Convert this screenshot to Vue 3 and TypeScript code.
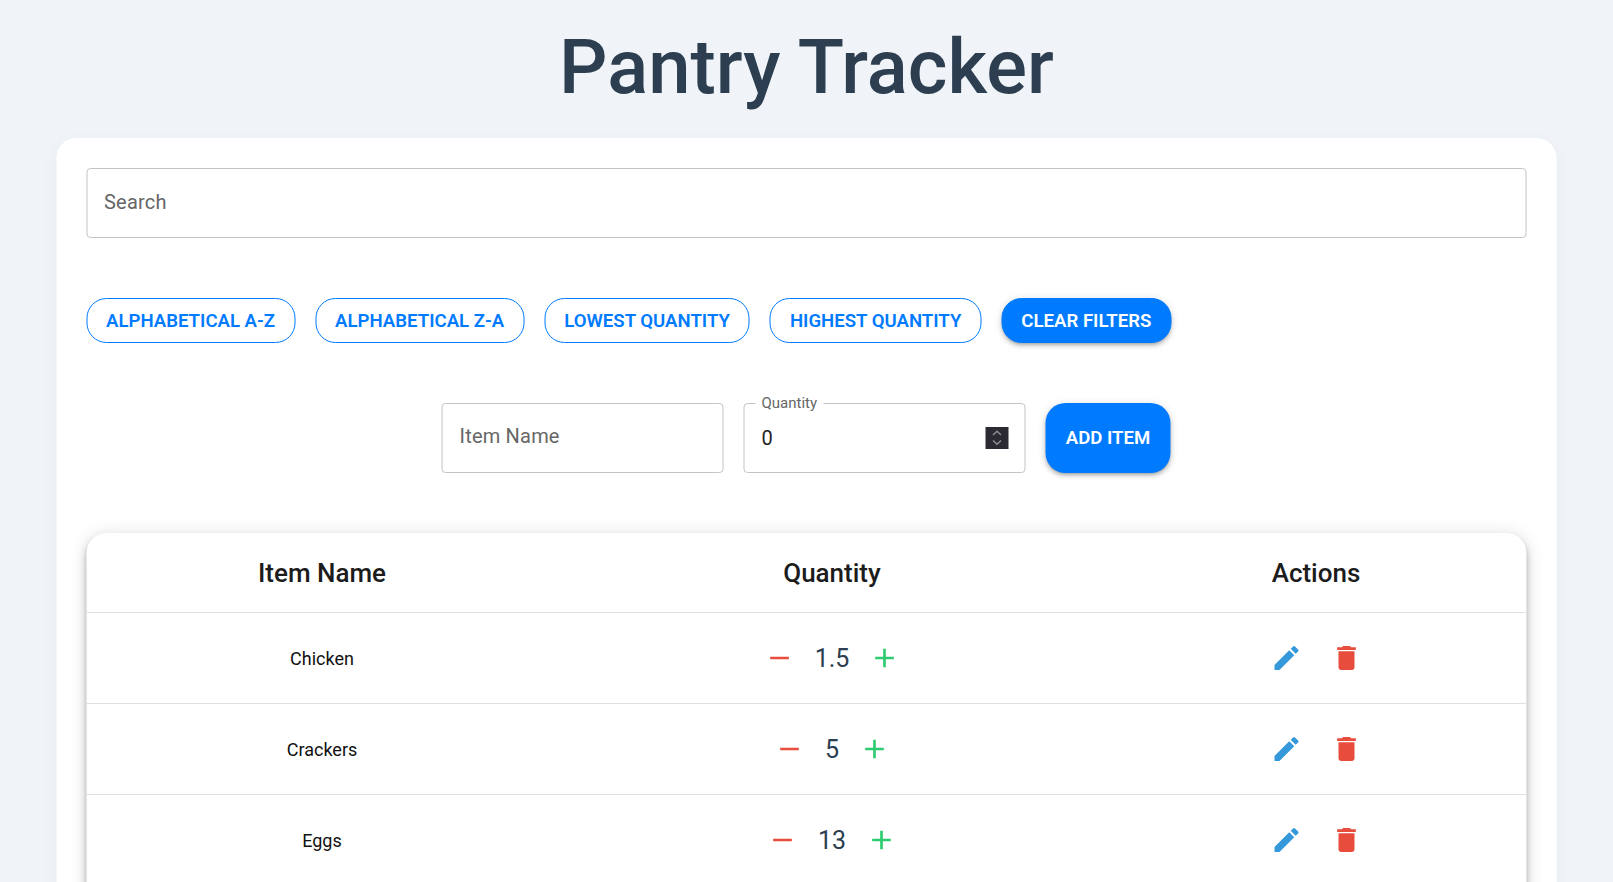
<script setup lang="ts">
interface Row { name: string; qty: string }
const rows: Row[] = [
  { name: 'Chicken', qty: '1.5' },
  { name: 'Crackers', qty: '5' },
  { name: 'Eggs', qty: '13' },
]
const sorts = ['Alphabetical A-Z', 'Alphabetical Z-A', 'Lowest Quantity', 'Highest Quantity']
</script>

<template>
  <div class="page">
    <h1 class="title">Pantry Tracker</h1>
    <main class="card">
      <input class="field search ph" type="text" placeholder="Search" />
      <div class="chips">
        <button v-for="s in sorts" :key="s" class="chip">{{ s }}</button>
        <button class="chip solid">Clear Filters</button>
      </div>
      <div class="add-row">
        <input class="field small ph" type="text" placeholder="Item Name" />
        <div class="qty-field">
          <span class="qty-label">Quantity</span>
          <input class="field small" type="text" value="0" />
          <span class="spinner">
            <svg width="23" height="22" viewBox="0 0 23 22" fill="none" stroke="#8d8c96" stroke-width="1.5">
              <path d="M7.5 8 11.5 4.2l4 3.8" />
              <path d="M7.5 13.5 11.5 17.3l4-3.8" />
            </svg>
          </span>
        </div>
        <button class="add-btn">Add Item</button>
      </div>
      <section class="table">
        <div class="tr head">
          <div>Item Name</div>
          <div>Quantity</div>
          <div>Actions</div>
        </div>
        <div v-for="r in rows" :key="r.name" class="tr">
          <div class="name">{{ r.name }}</div>
          <div class="qty">
            <button class="icon"><svg viewBox="0 0 24 24" fill="#e74c3c"><path d="M19 13H5v-2h14v2z" /></svg></button>
            <span class="num">{{ r.qty }}</span>
            <button class="icon"><svg viewBox="0 0 24 24" fill="#2ecc71"><path d="M19 13h-6v6h-2v-6H5v-2h6V5h2v6h6v2z" /></svg></button>
          </div>
          <div class="actions">
            <button class="icon"><svg viewBox="0 0 24 24" fill="#3498db"><path d="M3 17.25V21h3.75L17.81 9.94l-3.75-3.75L3 17.25zM20.71 7.04c.39-.39.39-1.02 0-1.41l-2.34-2.34a.9959.9959 0 0 0-1.41 0l-1.83 1.83 3.75 3.75 1.83-1.83z" /></svg></button>
            <button class="icon"><svg viewBox="0 0 24 24" fill="#e74c3c"><path d="M6 19c0 1.1.9 2 2 2h8c1.1 0 2-.9 2-2V7H6v12zM19 4h-3.5l-1-1h-5l-1 1H5v2h14V4z" /></svg></button>
          </div>
        </div>
      </section>
    </main>
  </div>
</template>

<style>
html, body { margin: 0; height: 100%; overflow: hidden; background: #f0f4f8; }
</style>

<style scoped>
.page {
  height: 882px;
  overflow: hidden;
  font-family: Roboto, "Noto Sans", sans-serif;
  background: #f0f4f8;
}
.title {
  margin: 0;
  height: 138px;
  line-height: 134px;
  text-align: center;
  font-size: 76px;
  font-weight: 500;
  color: #2c3e50;
}
.card {
  width: 1440px;
  margin: 0 auto;
  transform: translateX(-0.5px);
  padding: 30px;
  background: #fff;
  border-radius: 20px;
  box-shadow: 0 4px 20px rgba(0, 0, 0, 0.03);
}
.field {
  display: block;
  box-sizing: border-box;
  width: 100%;
  height: 70px;
  padding: 0 17px;
  border: 1px solid #c4c4c4;
  border-radius: 4px;
  outline: none;
  background: #fff;
  font: 400 20px Roboto, sans-serif;
  letter-spacing: 0.2px;
  color: #222;
}
.field.search { padding-bottom: 3px; }
.field.small.ph { padding-bottom: 5px; }
.field::placeholder { color: #666; opacity: 1; }
.chips {
  display: flex;
  gap: 20px;
  margin-top: 60px;
}
button {
  font-family: Roboto, sans-serif;
  cursor: pointer;
}
.chip {
  box-sizing: border-box;
  height: 45px;
  padding: 0 19px;
  border: 1px solid #007bff;
  border-radius: 20px;
  background: #fff;
  color: #007bff;
  font-size: 18.6px;
  font-weight: 600;
  text-transform: uppercase;
}
.chip.solid {
  background: #007bff;
  color: #fff;
  box-shadow: 0 3px 3px -2px rgba(0,0,0,.2), 0 3px 4px rgba(0,0,0,.14), 0 1px 8px rgba(0,0,0,.12);
}
.add-row {
  display: flex;
  justify-content: center;
  gap: 20px;
  margin-top: 60px;
}
.small { width: 282px; }
.qty-field { position: relative; }
.qty-label {
  position: absolute;
  left: 12px;
  top: -9px;
  padding: 0 6px;
  background: #fff;
  font-size: 15px;
  line-height: 18px;
  color: #666;
  z-index: 1;
}
.spinner {
  position: absolute;
  right: 17px;
  top: 24px;
  width: 23px;
  height: 22px;
  background: #2b2a33;
  display: flex;
  align-items: center;
  justify-content: center;
}
.add-btn {
  width: 125px;
  height: 70px;
  padding: 0;
  border: 0;
  border-radius: 20px;
  background: #007bff;
  color: #fff;
  font-size: 18.6px;
  font-weight: 600;
  text-transform: uppercase;
  box-shadow: 0 3px 3px -2px rgba(0,0,0,.2), 0 3px 4px rgba(0,0,0,.14), 0 1px 8px rgba(0,0,0,.12);
}
.table {
  margin-top: 60px;
  padding-bottom: 91px;
  border-radius: 20px;
  overflow: hidden;
  background: #fff;
  box-shadow: 0 3px 5px -1px rgba(0,0,0,.2), 0 6px 10px rgba(0,0,0,.14), 0 1px 18px rgba(0,0,0,.12);
}
.tr {
  display: grid;
  grid-template-columns: 472px 548px 420px;
  height: 91px;
  align-items: center;
  text-align: center;
  border-bottom: 1px solid #e0e0e0;
  box-sizing: border-box;
}
.tr.head {
  height: 80px;
  font-size: 26px;
  font-weight: 500;
  color: #1c1c1c;
}
.name { font-size: 18px; color: #111; }
.qty, .actions {
  display: flex;
  align-items: center;
  justify-content: center;
}
.num {
  margin: 0 11px;
  font-size: 25px;
  color: #2c3e50;
}
.actions { gap: 12px; }
.icon {
  width: 48px;
  height: 48px;
  padding: 8px;
  border: 0;
  background: none;
  display: flex;
}
.icon svg { width: 32px; height: 32px; display: block; }
</style>
